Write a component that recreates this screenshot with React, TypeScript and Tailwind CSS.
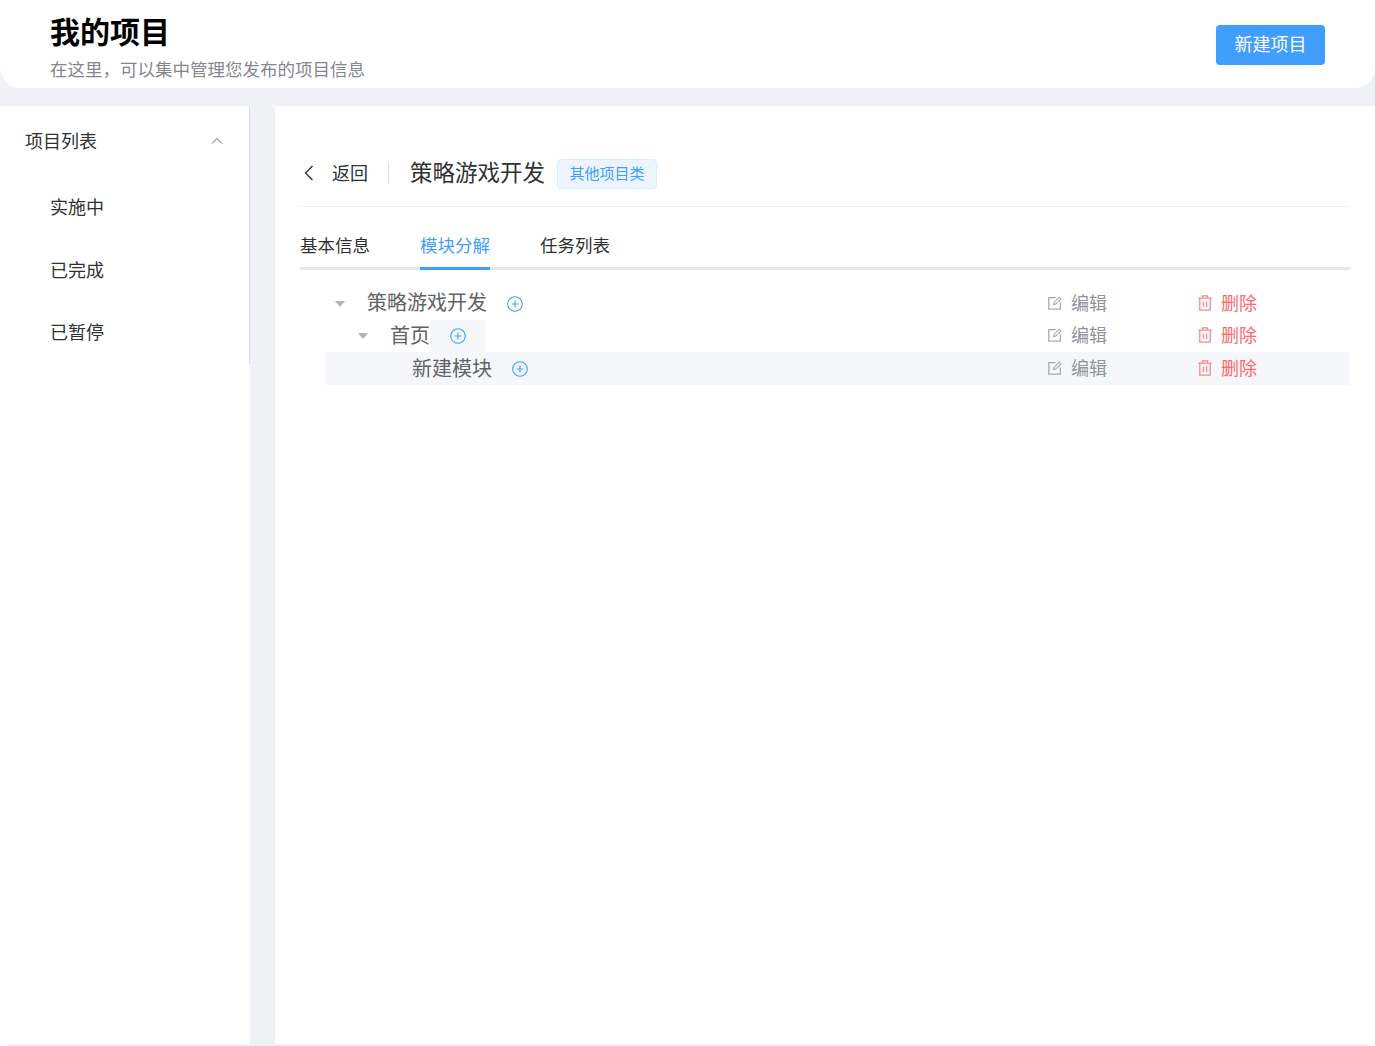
import React from "react";

const font = { fontFamily: '"Noto Sans CJK SC", sans-serif' };

function Plus() {
  return (
    <svg width="16" height="16" viewBox="0 0 16 16" fill="none" stroke="#409eff" strokeWidth="1.1" className="shrink-0">
      <circle cx="8" cy="8" r="7.3" />
      <path d="M8 4.6v6.8M4.6 8h6.8" />
    </svg>
  );
}

function Edit() {
  return (
    <svg width="14" height="14" viewBox="0 0 14 14" fill="none" stroke="#a6a9ad" strokeWidth="1.3" className="shrink-0">
      <path d="M7.5 1.6H.8v11.6h11.6V6.6" />
      <path d="M5.6 8.6l.5-2.2L11.2 1.2l1.7 1.7L7.8 8.1z" strokeWidth="1.1" />
    </svg>
  );
}

function Trash() {
  return (
    <svg width="14" height="16" viewBox="0 0 14 16" fill="none" stroke="#f78989" strokeWidth="1.3" className="shrink-0">
      <path d="M.3 3.2h13.4M4.4 3.2V.8h5.2v2.4M1.8 3.2v12h10.4v-12M5.4 6.4v5.6M8.6 6.4v5.6" />
    </svg>
  );
}

function Caret() {
  return (
    <span className="w-[10px] h-[6px] shrink-0 flex">
      <svg width="10" height="6" viewBox="0 0 10 6" fill="#b0b2b8">
        <path d="M0 0h10L5 6z" />
      </svg>
    </span>
  );
}

function Actions({ raised }: { raised?: boolean }) {
  return (
    <div className={raised ? "ml-auto flex items-center w-[302px] shrink-0 pb-[3px]" : "ml-auto flex items-center w-[302px] shrink-0 pb-[2px]"}>
      <div className="flex items-center w-[150px]">
        <Edit />
        <span className="ml-[9px] text-[18px] text-[#909399] leading-[28px] pb-[1px]">编辑</span>
      </div>
      <div className="flex items-center">
        <Trash />
        <span className="ml-[9px] text-[18px] text-[#f56c6c] leading-[28px] pb-[1px]">删除</span>
      </div>
    </div>
  );
}

function SideItem({ label }: { label: string }) {
  return (
    <div className="h-[62.5px] flex items-center pl-[50px] pb-[1px] text-[18px] text-[#303133]">{label}</div>
  );
}

function Tab({ label, active }: { label: string; active?: boolean }) {
  return (
    <div
      className={
        active
          ? "w-[70px] h-[63px] flex items-center pt-[17px] -mb-[3px] whitespace-nowrap border-b-[3px] border-[#409eff] text-[#409eff]"
          : "w-[70px] h-[63px] flex items-center pt-[17px] -mb-[3px] whitespace-nowrap border-b-[3px] border-transparent"
      }
    >
      {label}
    </div>
  );
}

export default function App() {
  return (
    <div style={font} className="h-[1046px] overflow-hidden bg-white">
      <div className="h-[1050px] rounded-[20px] bg-[#f0f1f5] flex flex-col">
        <header className="h-[88px] shrink-0 bg-white rounded-b-[20px] flex items-center justify-between pl-[50px] pr-[50px]">
          <div className="flex flex-col">
            <h1 className="text-[30px] font-bold leading-[40px] text-black -mt-[4px]">我的项目</h1>
            <p className="text-[17.5px] leading-[26px] text-[#85878c] mt-[6px] -mb-[8px]">在这里，可以集中管理您发布的项目信息</p>
          </div>
          <button className="w-[109px] h-[40px] mt-[1px] pb-[2px] bg-[#409eff] rounded-[4px] text-white text-[18px]">新建项目</button>
        </header>

        <div className="flex mt-[18px] h-[938px] shrink-0">
          <aside className="w-[250px] shrink-0 bg-white">
            <div className="h-[258px] border-r border-[#dcdde2]">
              <div className="h-[70px] flex items-center justify-between pl-[25px] pr-[26px] pb-[1px] text-[18px] text-[#303133]">
                <span>项目列表</span>
                <svg width="12" height="8" viewBox="0 0 12 8" fill="none" stroke="#606266" strokeWidth="1">
                  <path d="M1 6.5L6 1.5l5 5" />
                </svg>
              </div>
              <SideItem label="实施中" />
              <SideItem label="已完成" />
              <SideItem label="已暂停" />
            </div>
          </aside>

          <main className="ml-[25px] flex-1 bg-white px-[25px] pt-[50px]">
            <div className="h-[51px] border-b border-[#ebeef5] flex items-center pb-[17px]">
              <svg width="10" height="16" viewBox="0 0 10 16" fill="none" stroke="#303133" strokeWidth="1.4" className="ml-[4px] shrink-0">
                <path d="M8.5 1L1.5 8l7 7" />
              </svg>
              <span className="ml-[18px] text-[18px] text-[#303133]">返回</span>
              <span className="ml-[20px] w-px h-[20px] bg-[#dcdfe6]" />
              <span className="ml-[21px] pb-[2px] text-[22.5px] text-[#303133]">策略游戏开发</span>
              <span className="ml-[12px] mt-[2px] w-[100px] h-[30px] flex items-center justify-center rounded-[4px] bg-[#ecf5ff] border border-[#d9ecff] text-[15px] text-[#409eff]">其他项目类</span>
            </div>
            <div className="flex gap-[50px] border-b-[3px] border-[#e4e7ed] h-[63px] text-[17.5px] text-[#303133]">
              <Tab label="基本信息" />
              <Tab label="模块分解" active />
              <Tab label="任务列表" />
            </div>

            <div className="mt-[17px] ml-[25px] text-[20px] text-[#606266]">
              <div className="h-[33px] flex items-center">
                <span className="ml-[10px] pt-[1px]"><Caret /></span>
                <span className="ml-[22px] leading-[30px] pb-[3px]">策略游戏开发</span>
                <span className="ml-[20px]"><Plus /></span>
                <Actions />
              </div>
              <div className="h-[32px] flex items-center">
                <span className="ml-[33px]"><Caret /></span>
                <span className="ml-[22px] leading-[30px] pb-[2px]">首页</span>
                <span className="h-[32px] w-[55px] bg-[#f5f7fa] flex items-center pl-[20px]"><Plus /></span>
                <Actions raised />
              </div>
              <div className="h-[33px] flex items-center bg-[#f5f7fa]">
                <span className="ml-[87px] leading-[30px] pb-[2px]">新建模块</span>
                <span className="ml-[20px]"><Plus /></span>
                <Actions />
              </div>
            </div>
          </main>
        </div>
      </div>
    </div>
  );
}
